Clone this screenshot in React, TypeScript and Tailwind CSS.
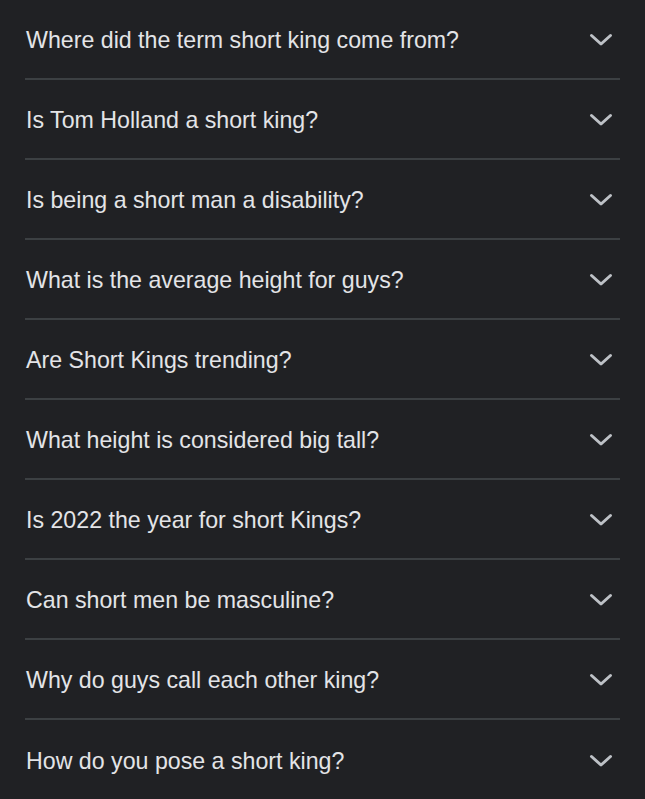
const questions = [
  "Where did the term short king come from?",
  "Is Tom Holland a short king?",
  "Is being a short man a disability?",
  "What is the average height for guys?",
  "Are Short Kings trending?",
  "What height is considered big tall?",
  "Is 2022 the year for short Kings?",
  "Can short men be masculine?",
  "Why do guys call each other king?",
  "How do you pose a short king?",
]

function Chevron() {
  return (
    <svg width="24" height="14" viewBox="0 0 24 14" fill="none" className="mt-[1px] shrink-0">
      <polyline
        points="2.5,2.5 12,11 21.5,2.5"
        stroke="#bdc1c6"
        strokeWidth="3"
        strokeLinecap="round"
        strokeLinejoin="round"
      />
    </svg>
  )
}

export default function App() {
  return (
    <div className="min-h-[799px] bg-[#202124] px-[25px] font-['Liberation_Sans',Arial,sans-serif]">
      {questions.map((q, i) => (
        <div
          key={q}
          className={`flex h-[80px] items-center justify-between pr-[7px] ${
            i < questions.length - 1 ? "border-b-2 border-[#3c4043]" : ""
          }`}
        >
          <span className="pl-[1px] pt-[3px] text-[23.2px] leading-none text-[#e3e4e7]">{q}</span>
          <Chevron />
        </div>
      ))}
    </div>
  )
}
